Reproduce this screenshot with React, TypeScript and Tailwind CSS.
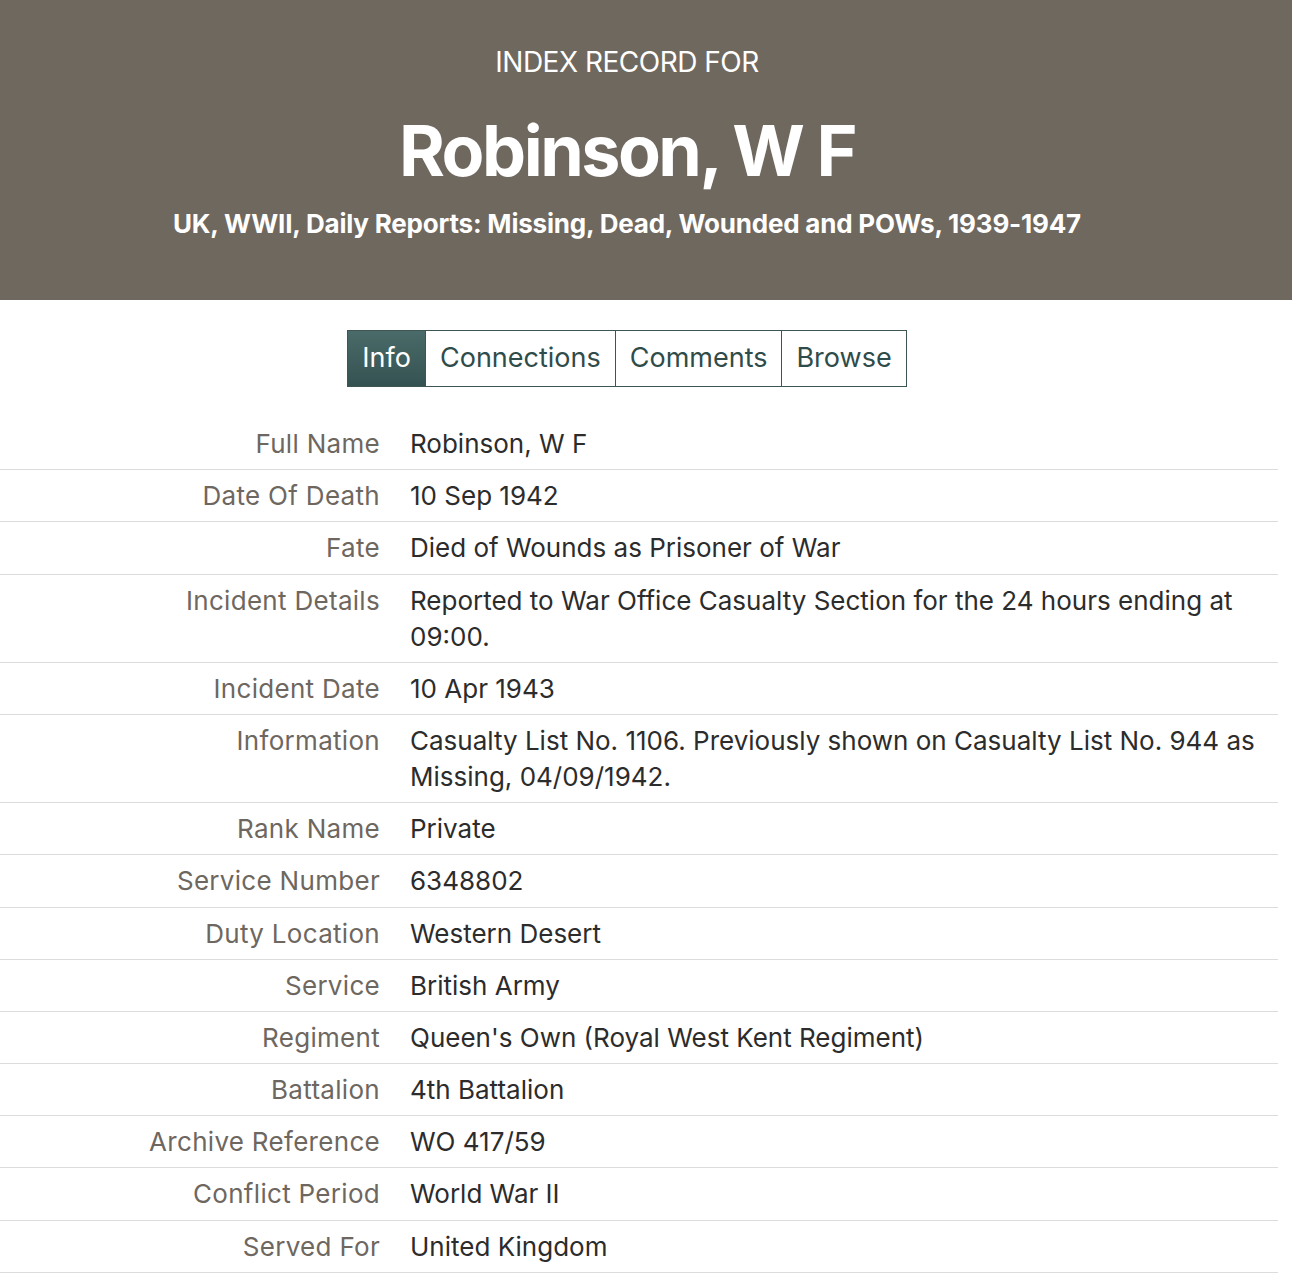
import React from "react";

const rows: [string, string][] = [
  ["Full Name", "Robinson, W F"],
  ["Date Of Death", "10 Sep 1942"],
  ["Fate", "Died of Wounds as Prisoner of War"],
  ["Incident Details", "Reported to War Office Casualty Section for the 24 hours ending at 09:00."],
  ["Incident Date", "10 Apr 1943"],
  ["Information", "Casualty List No. 1106. Previously shown on Casualty List No. 944 as Missing, 04/09/1942."],
  ["Rank Name", "Private"],
  ["Service Number", "6348802"],
  ["Duty Location", "Western Desert"],
  ["Service", "British Army"],
  ["Regiment", "Queen's Own (Royal West Kent Regiment)"],
  ["Battalion", "4th Battalion"],
  ["Archive Reference", "WO 417/59"],
  ["Conflict Period", "World War II"],
  ["Served For", "United Kingdom"],
];

export default function App() {
  return (
    <div className="min-h-[1275px] bg-white" style={{ fontFamily: "Inter, 'Liberation Sans', sans-serif" }}>
      <header className="h-[300px] bg-[#6f685f] text-white">
        <div className="w-[1254px] flex flex-col items-center">
          <div className="mt-[46px] text-[28px] leading-[32px] tracking-[-0.5px]">INDEX RECORD FOR</div>
          <h1 className="mt-[33px] text-[70px] leading-[80px] font-bold tracking-[-2.5px]">Robinson, W F</h1>
          <div className="mt-[17px] text-[26px] leading-[32px] font-bold tracking-[-0.2px]">
            UK, WWII, Daily Reports: Missing, Dead, Wounded and POWs, 1939-1947
          </div>
        </div>
      </header>

      <nav className="mt-[30px] w-[1254px] flex justify-center">
        <div className="flex border border-[#3d5654] h-[57px] text-[27px]">
          <div className="px-[14px] flex items-center text-white bg-gradient-to-b from-[#4a6b69] to-[#345251]">Info</div>
          <div className="px-[14px] flex items-center text-[#2f4c4a] border-l border-[#3d5654]">Connections</div>
          <div className="px-[14px] flex items-center text-[#2f4c4a] border-l border-[#3d5654]">Comments</div>
          <div className="px-[14px] flex items-center text-[#2f4c4a] border-l border-[#3d5654]">Browse</div>
        </div>
      </nav>

      <div className="mt-[31px] mr-[14px]">
        {rows.map(([label, value]) => (
          <div key={label} className="flex border-b border-[#dcdcdc] pt-[8px] pb-[7.2px] text-[26px] leading-[36px]">
            <div className="w-[380px] shrink-0 text-right text-[#6e675f] tracking-[0.3px]">{label}</div>
            <div className="pl-[30px] text-[#2c2c2c]">{value}</div>
          </div>
        ))}
      </div>
    </div>
  );
}
